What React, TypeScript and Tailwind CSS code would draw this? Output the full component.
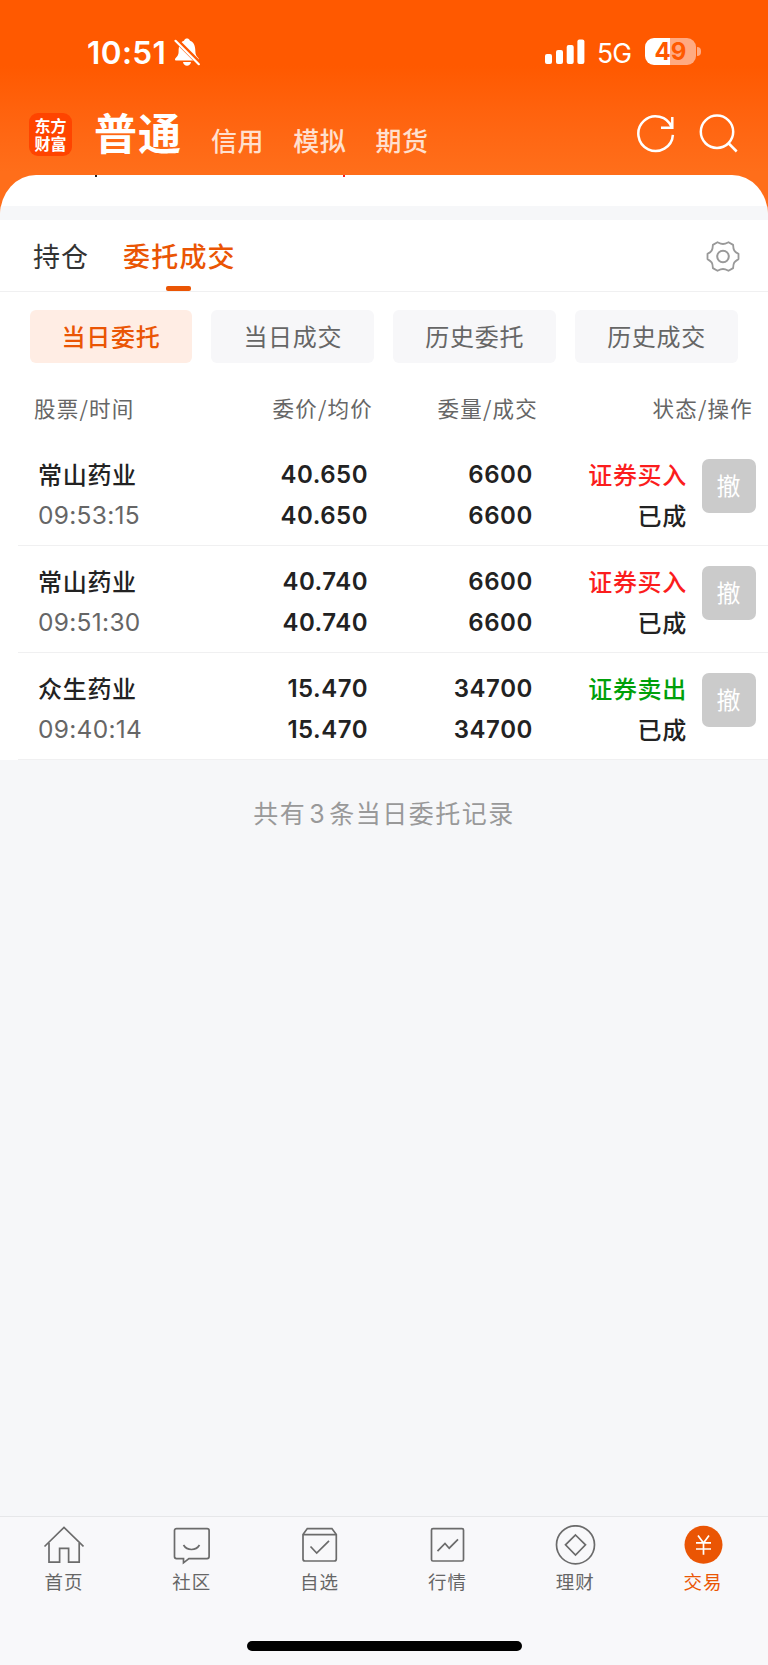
import type { ReactNode } from 'react';
import clsx from 'clsx';

interface Order {
  name: string;
  time: string;
  price: string;
  amount: string;
  side: 'buy' | 'sell';
}

const orders: Order[] = [
  { name: '常山药业', time: '09:53:15', price: '40.650', amount: '6600', side: 'buy' },
  { name: '常山药业', time: '09:51:30', price: '40.740', amount: '6600', side: 'buy' },
  { name: '众生药业', time: '09:40:14', price: '15.470', amount: '34700', side: 'sell' },
];

const filters = ['当日委托', '当日成交', '历史委托', '历史成交'];

const navItems: { label: string; icon: ReactNode }[] = [
  {
    label: '首页',
    icon: (
      <>
        <path d="M1.500 21.500 21 2.500 40.500 21.500" />
        <path d="M6 18v19.200h10.600V23.400h9V37.200h10.600V18" />
      </>
    ),
  },
  {
    label: '社区',
    icon: (
      <>
        <path d="M5.500 3.600h30.600a2 2 0 0 1 2 2v26a2 2 0 0 1-2 2H17.900l-5.400 4.200v-4.200h-7a2 2 0 0 1-2-2v-26a2 2 0 0 1 2-2z" />
        <path d="M12.500 20c3.600 6 12.400 6 16 0" />
      </>
    ),
  },
  {
    label: '自选',
    icon: (
      <>
        <path d="M4 9.500 8.300 3.600h24.600l4.400 5.900v24.500a2 2 0 0 1-2 2H6a2 2 0 0 1-2-2z" />
        <path d="M4 9.700h33.300" />
        <path d="m11.500 21.500 6.200 6.500L30 15.800" />
      </>
    ),
  },
  {
    label: '行情',
    icon: (
      <>
        <rect x="4.500" y="3.600" width="32" height="32.400" rx="1.500" />
        <path d="m10.500 26.200 7.500-7.700 4.200 4.700 8.800-8.900" />
      </>
    ),
  },
  {
    label: '理财',
    icon: (
      <>
        <circle cx="20.500" cy="19.800" r="19" />
        <path d="M20.500 10 30.500 19.800 20.500 30 10.500 19.800z" />
      </>
    ),
  },
  {
    label: '交易',
    icon: (
      <>
        <circle cx="20.500" cy="19.800" r="19" fill="#ea5504" stroke="none" />
        <path
          d="m15 10.500 5.500 7.500 5.500-7.500M20.500 18v11.800M13 17.800h15M13 24h15"
          stroke="#fff"
          strokeWidth="1.700"
        />
      </>
    ),
  },
];

function StatusBar() {
  return (
    <div className="flex h-[104px] items-start pt-[36px] pl-[87px] font-['Inter'] text-white">
      <span className="w-[87px] text-[31.5px] leading-[34px] font-semibold tracking-[0.4px]">10:51</span>
      <svg className="mt-[2px]" width="27" height="29" viewBox="0 0 27 29" fill="#fff">
        <path d="M1 21.500c0-1.800 3.600-3 3.600-7.500C4.600 7 6.500 3.800 10 2.700 10.500 1 11.800.5 13 .5s2.500.5 3 2.200c3.500 1.100 5.400 4.300 5.400 11.300 0 4.500 3.600 5.700 3.600 7.500 0 .7-.5 1-1.200 1H2.200c-.7 0-1.200-.3-1.200-1z" />
        <path d="M9 24h8c-.5 2.500-2 3.700-4 3.700S9.500 26.500 9 24z" />
        <path d="M.500.500 26 26" stroke="#ff5900" strokeWidth="5" />
        <path d="M1.500 2.800 24.800 26.200" stroke="#fff" strokeWidth="2.200" strokeLinecap="round" />
      </svg>
      <svg className="mt-[3px] ml-[344px]" width="40" height="26" viewBox="0 0 40 26" fill="#fff">
        <rect x="0" y="15" width="7" height="10" rx="2" />
        <rect x="11" y="11" width="7" height="14" rx="2" />
        <rect x="21.700" y="6" width="7" height="19" rx="2" />
        <rect x="32.400" y="0.500" width="7" height="24.500" rx="2" />
      </svg>
      <span className="ml-[12px] w-[48px] text-[26.5px] leading-[34px] tracking-[-0.8px]">5G</span>
      <div className="mt-[2px] flex h-[27px] w-[51px] items-center justify-center rounded-[9px] bg-linear-to-r from-white from-49% to-[#ffaa82] to-49%">
        <span className="text-[24px] leading-[27px] font-bold text-[#ff5900]">49</span>
      </div>
      <div className="mt-[11px] ml-[1px] h-[9px] w-[4px] rounded-r-full bg-[#ffaa82]" />
    </div>
  );
}

function AccountBar() {
  return (
    <div className="flex h-[71px] items-start pl-[29px] text-white">
      <div className="mt-[9px] flex h-[43px] w-[43px] shrink-0 flex-col items-center rounded-[9px] bg-[#ff4400] pt-[3px] text-[16px] leading-[18px] font-bold">
        <span>东方</span>
        <span>财富</span>
      </div>
      <h1 className="-mt-[3px] ml-[22px] text-[43px] leading-[60px] font-bold tracking-[1px]">普通</h1>
      <div className="mt-[14px] ml-[29px] flex gap-[29px] text-[26px] leading-[44px] font-medium tracking-[0.6px] text-[#ffe0cf]">
        <span>信用</span>
        <span>模拟</span>
        <span>期货</span>
      </div>
      <svg
        className="mt-[9px] mr-[27px] ml-auto"
        width="105"
        height="44"
        viewBox="0 0 105 44"
        fill="none"
        stroke="#fff"
        strokeWidth="2.500"
      >
        <path d="M36.900 21.800A17.300 17.300 0 1 1 35.800 14.500" />
        <path d="M36.300 4v10.700H25" />
        <circle cx="81" cy="18.800" r="16.200" />
        <path d="m92.300 30 8.400 8.500" />
      </svg>
    </div>
  );
}

function OrderRow({ name, time, price, amount, side }: Order) {
  return (
    <div className="ml-[18px] flex h-[107px] border-b border-[#f0f0f1] text-[24px] leading-[41px] text-[#222]">
      <div className="ml-[20px] w-[160px]">
        <p className="mt-[14px] font-medium tracking-[0.7px]">{name}</p>
        <p className="mt-px font-['Inter'] text-[24.5px] tracking-[0.3px] text-[#666]">{time}</p>
      </div>
      <div className="mt-[15px] w-[170px] text-right font-['Inter'] font-semibold tracking-[0.5px]">
        <p>{price}</p>
        <p>{price}</p>
      </div>
      <div className="mt-[15px] w-[165px] text-right font-['Inter'] font-semibold tracking-[0.6px]">
        <p>{amount}</p>
        <p>{amount}</p>
      </div>
      <div className="mt-[14px] w-[154px] text-right font-medium tracking-[0.7px]">
        <p className={side === 'buy' ? 'text-[#fb1d1d]' : 'text-[#00a00a]'}>
          {side === 'buy' ? '证券买入' : '证券卖出'}
        </p>
        <p>已成</p>
      </div>
      <button className="mt-[20px] ml-[14.500px] h-[54px] w-[54px] rounded-[7px] bg-[#cbcbcb] pb-[3px] text-[24px] text-white">
        撤
      </button>
    </div>
  );
}

export default function App() {
  return (
    <div className="flex h-[1665px] w-[768px] flex-col overflow-hidden bg-[#f6f7f9] font-['Noto_Sans_CJK_SC',sans-serif]">
      <header className="h-[220px] shrink-0 bg-linear-to-b from-[#ff5900] from-30% to-[#ff6e1a] to-78%">
        <StatusBar />
        <AccountBar />
        {/* top of the scrolled sheet, the holding row above is cut off */}
        <div className="relative h-[45px] overflow-hidden rounded-t-[36px_40px] bg-white">
          <i className="absolute top-0 left-[95px] h-[2px] w-[2px] bg-[#222]" />
          <i className="absolute top-0 left-[343px] h-[2px] w-[2px] bg-[#fb1d1d]" />
          <div className="mt-[31px] h-[14px] bg-[#f6f7f9]" />
        </div>
      </header>

      <main>
        <div className="bg-white">
          <div className="flex h-[72px] items-start border-b border-[#f0f0f1] pt-[16px] pl-[33px] text-[27px] leading-[40px]">
            <span className="tracking-[1px] text-[#333]">持仓</span>
            <div className="relative ml-[34px] font-medium tracking-[1.2px] text-[#ea5504]">
              委托成交
              <i className="absolute top-[50px] left-[43px] h-[5px] w-[25px] rounded-[2px] bg-[#ea5504]" />
            </div>
            <svg
              className="mt-[4px] mr-[28px] ml-auto"
              width="34"
              height="34"
              viewBox="0 0 34 34"
              fill="none"
              stroke="#999"
              strokeWidth="1.800"
              strokeLinejoin="round"
            >
              <path d="M11.500 2.200C13 3 14.500 4 17 4s4-1 5.500-1.800l4.600 2.700c.2 5.100 1.100 6.600 5.400 9v5.200c-4.300 2.400-5.200 3.900-5.400 9l-4.600 2.700C21 30 19.500 29 17 29s-4 1-5.500 1.800l-4.600-2.700c-.2-5.100-1.100-6.600-5.400-9v-5.200c4.300-2.400 5.200-3.900 5.400-9z" />
              <circle cx="17" cy="16.500" r="5.800" strokeWidth="2" />
            </svg>
          </div>

          <div className="grid grid-cols-4 gap-[19px] pt-[18px] pr-[30px] pl-[29.5px]">
            {filters.map((label, i) => (
              <button
                key={label}
                className={clsx(
                  'h-[53px] rounded-[6px] pb-px text-[24px] leading-[52px] tracking-[0.7px]',
                  i === 0 ? 'bg-[#ffede4] font-medium text-[#ea5504]' : 'bg-[#f7f7f9] text-[#666]',
                )}
              >
                {label}
              </button>
            ))}
          </div>

          <div className="flex h-[76px] pt-[25px] pl-[34px] text-[21.5px] leading-[40px] tracking-[1.2px] text-[#666]">
            <span className="w-[160px]">股票/时间</span>
            <span className="w-[179px] text-right">委价/均价</span>
            <span className="w-[165px] text-right">委量/成交</span>
            <span className="w-[215px] text-right">状态/操作</span>
          </div>

          {orders.map((order) => (
            <OrderRow key={order.time} {...order} />
          ))}
        </div>

        <p className="mt-[31px] text-center text-[25px] leading-[42px] tracking-[1.5px] text-[#999]">
          共有<span className="mx-[3px] font-['Inter']">3</span>条当日委托记录
        </p>
      </main>

      <footer className="mt-auto h-[149px] shrink-0 border-t border-[#e6e7e9] bg-[#f8f8fa]">
        <nav className="mr-px grid grid-cols-6 pt-[8px]">
          {navItems.map(({ label, icon }) => (
            <div
              key={label}
              className={clsx(
                'flex flex-col items-center text-[18.5px] leading-[28px] tracking-[1px]',
                label === '交易' ? 'text-[#ea5504]' : 'text-[#666]',
              )}
            >
              <svg
                width="41"
                height="40"
                viewBox="0 0 41 40"
                fill="none"
                stroke="#6b6b6b"
                strokeWidth="1.700"
              >
                {icon}
              </svg>
              <span className="mt-[2px]">{label}</span>
            </div>
          ))}
        </nav>
        <div className="mx-auto mt-[46px] h-[10px] w-[275px] rounded-full bg-black" />
      </footer>
    </div>
  );
}
